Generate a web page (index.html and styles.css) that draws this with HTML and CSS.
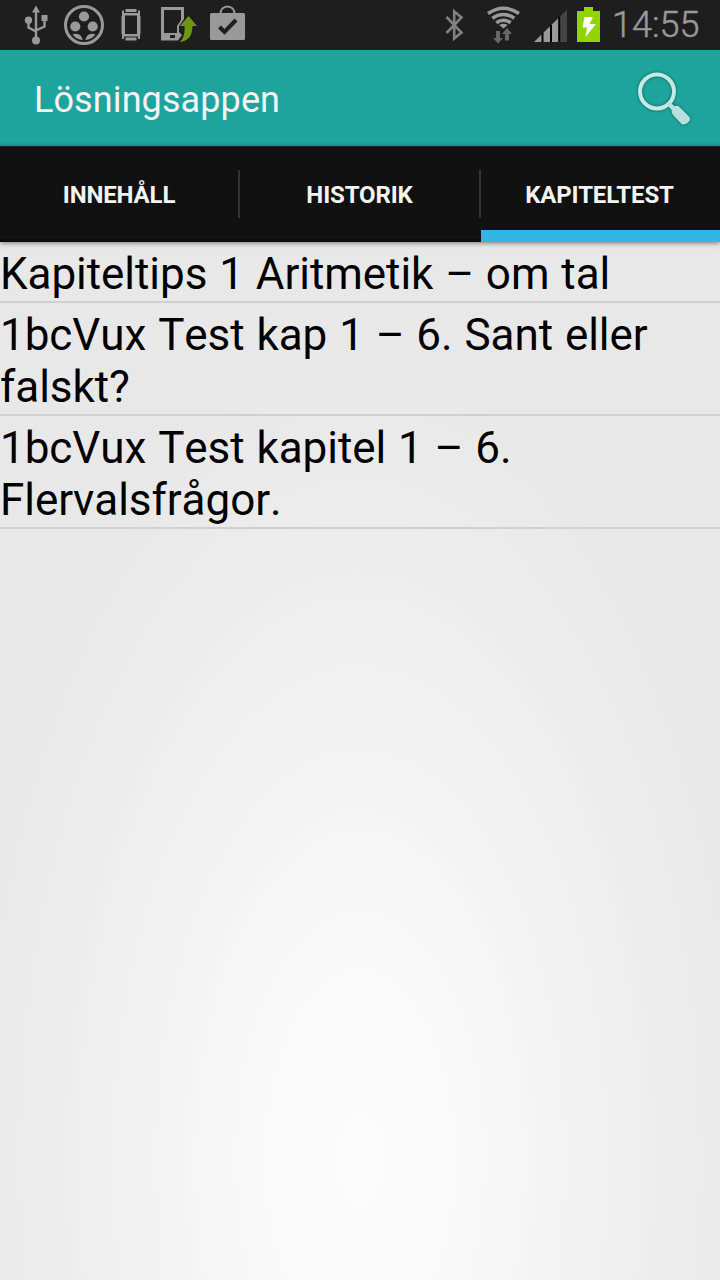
FILE: index.html
```html
<!DOCTYPE html>
<html lang="sv">
<head>
<meta charset="utf-8">
<title>Lösningsappen</title>
<link rel="stylesheet" href="styles.css">
</head>
<body>
<div class="screen">
  <header class="status">
    <div class="status-left">
      <svg width="26" height="50" viewBox="23 0 26 50" fill="none" stroke="#999" stroke-width="2.400">
        <path d="M36 10v30M28.500 20v7.500l7.500 4M44.500 18v8.500l-8.500 4"/>
        <path d="M36 5.500l4 7h-8zM41.500 15h6v6h-6z" fill="#999" stroke="none"/>
        <circle cx="28.500" cy="20.200" r="3.700" fill="#999" stroke="none"/>
        <circle cx="36" cy="40.500" r="4" fill="#999" stroke="none"/>
      </svg>
      <svg class="reel" width="42" height="50" viewBox="63 0 42 50" fill="#999">
        <circle cx="84" cy="25" r="18.500" fill="none" stroke="#999" stroke-width="3"/>
        <circle cx="84" cy="16.500" r="5.100"/><circle cx="75.300" cy="26.500" r="5.100"/><circle cx="92.700" cy="26.500" r="5.100"/>
        <path d="M72.500 34.500q8-3 10.300 5.500q-6.500-.4-10.300-5.500zM95.500 34.500q-8-3-10.300 5.500q6.500-.4 10.300-5.500z"/>
      </svg>
      <svg class="watch" width="22" height="50" viewBox="120 0 22 50" fill="#999">
        <path fill-rule="evenodd" d="M122 10.500h2v2.500h14v-2.500h2V39h-2v-2.500h-14V39h-2zM125 15.500v18.500h12V15.500z"/>
        <path d="M125.500 9h11v3h-11zM125.500 37.500h11v3h-11z"/>
        <path d="M121.500 16h1v18h-1zM139.500 16h1v18h-1z"/>
      </svg>
      <svg class="update" width="37" height="50" viewBox="160 0 37 50">
        <path fill="#999" fill-rule="evenodd" d="M161 7h23v12l-5 7v6l3 3-4 5.500h-17zM164 10v23h13v-7l4-6V10zM170 35v3h5v-3z"/>
        <path fill="#6f9613" d="M188.500 16l8.500 10h-4.500c0 9-4 15.500-13 16c4-3 5.500-8.500 5-16h-4.500z"/>
      </svg>
      <svg class="bag" width="36" height="50" viewBox="210 0 36 50" fill="none">
        <path d="M210 14.500q0-1.500 1.500-1.500h32q1.500 0 1.500 1.500v24q0 1.500-1.500 1.500h-32q-1.500 0-1.500-1.500z" fill="#999"/>
        <path d="M220.500 14c0-4 2.500-7.500 7-7.500s7 3.500 7 7.500" stroke="#999" stroke-width="2"/>
        <path d="M219.500 27l5 5 11.500-12" stroke="#1e1e1e" stroke-width="4"/>
      </svg>
    </div>
    <div class="status-right">
      <svg width="18" height="50" viewBox="445 0 18 50" fill="none" stroke="#808080" stroke-width="2.600">
        <path d="M446.500 17l15 15.500-7.300 6V11.500l7.300 6-15 15.500"/>
      </svg>
      <svg class="wifi" width="34" height="50" viewBox="486 0 34 50" fill="none" stroke="#999" stroke-width="3.500">
        <path d="M488 13.500q15.500-10.500 31 0M492.300 18.300q11-7.600 22 0M496.300 22.800q7.200-5 14.400 0"/>
        <path d="M499.200 25q4.300-2.600 8.600 0l-4.300 3.500z" fill="#999" stroke="none"/>
        <path d="M496 31h4v7h3l-5 5.500-5-5.500h3zM505 40.500h4V34h3l-5-6-5 6h3z" fill="#686868" stroke="none"/>
      </svg>
      <svg class="signal" width="34" height="50" viewBox="534 0 34 50">
        <path d="M534 42L559.500 17v25z" fill="#999"/><path d="M560 16.500l7-7V42h-7z" fill="#444"/>
        <path d="M542.500 42v-9M551 42V25M559.200 42V17" stroke="#000" stroke-width="2"/>
      </svg>
      <svg class="battery" width="23" height="50" viewBox="577 0 23 50">
        <path d="M577 11h7V7h9v4h7v31h-23z" fill="#91d400"/>
        <path d="M584.500 17h8.500l-3.500 7h6.500l-10.500 13 1.500-9.500h-4.500z" fill="#fff"/>
      </svg>
      <span class="clock">14:55</span>
    </div>
  </header>
  <div class="actionbar">
    <h1 class="title">Lösningsappen</h1>
    <svg class="search" width="60" height="60" viewBox="634 68 60 60">
      <circle cx="657" cy="91.500" r="17" fill="none" stroke="#c5e9e6" stroke-width="4"/>
      <path d="M668.500 103.500l6 6" stroke="#b6e0dd" stroke-width="4.500"/>
      <path d="M671.500 109.500q0-2 2.500-3 3-1.500 5.500.5l9.500 9.500q2.500 3-1 6t-6.500 1.500l-8.500-9q-1.500-2-1.500-5.500z" fill="#b6e0dd"/>
    </svg>
  </div>
  <nav class="tabs">
    <div class="tab"><span>INNEHÅLL</span></div>
    <div class="tab"><span>HISTORIK</span></div>
    <div class="tab active"><span>KAPITELTEST</span></div>
  </nav>
  <main class="list">
    <div class="row">Kapiteltips 1 Aritmetik – om tal</div>
    <div class="row">1bcVux Test kap 1 – 6. Sant eller<br>falskt?</div>
    <div class="row">1bcVux Test kapitel 1 – 6.<br>Flervalsfrågor.</div>
  </main>
</div>
</body>
</html>
```
FILE: styles.css
```css
* { box-sizing: border-box; }
body { margin: 0; font-family: Roboto, "Liberation Sans", sans-serif; }
.screen {
  width: 720px;
  height: 1280px;
  overflow: hidden;
  display: flex;
  flex-direction: column;
  background: radial-gradient(ellipse 400px 800px at 360px 1160px, #fcfcfc 0%, #fafafa 22%, #f1f1f1 58%, #e8e8e8 100%);
}
svg { display: block; flex: none; }
.status {
  height: 50px;
  flex: none;
  display: flex;
  justify-content: space-between;
  padding: 0 21px 0 23px;
  background: #1e1e1e;
}
.status-left, .status-right { display: flex; }
.reel { margin-left: 14px; }
.watch { margin-left: 15px; }
.update { margin-left: 18px; }
.bag { margin-left: 13px; }
.wifi { margin-left: 23px; }
.signal { margin-left: 14px; }
.battery { margin-left: 9px; }
.clock {
  width: 87px;
  margin-left: 12px;
  color: #999;
  font-size: 36px;
  line-height: 51px;
  font-weight: 300;
  -webkit-text-stroke: .5px #999;
  white-space: nowrap;
}
.actionbar {
  height: 96px;
  flex: none;
  display: flex;
  align-items: center;
  justify-content: space-between;
  padding: 0 26px 0 34px;
  background: #1ea49c;
}
.title {
  margin: 0;
  padding-top: 4px;
  color: #f3f3f3;
  font-size: 36px;
  font-weight: 400;
  line-height: 42px;
  letter-spacing: .1px;
}
.search { filter: drop-shadow(0 0 1.5px rgba(0, 60, 55, .7)); }
.tabs {
  height: 96px;
  flex: none;
  display: grid;
  grid-template-columns: 240px 241px 239px;
  background: #111;
  border-top: 1px solid #222;
  box-shadow: 0 1px 5px rgba(0, 0, 0, .5);
}
.tab {
  display: flex;
  justify-content: center;
  padding-top: 24px;
  border-bottom: 3px solid #0b0b0b;
  color: #f3f3f3;
  font-size: 24px;
  line-height: 48px;
  font-weight: 700;
  letter-spacing: -.15px;
}
.tab span { padding-right: 2px; white-space: nowrap; }
.tab:not(.active) {
  background: linear-gradient(#333, #333) right 23px / 2px 48px no-repeat;
}
.tab.active { border-bottom: 12px solid #33b5e5; }
.row {
  padding: 6px 0 1px;
  border-bottom: 2px solid #d0d0d0;
  color: #000;
  font-size: 44px;
  line-height: 52px;
  font-kerning: none;
  letter-spacing: -.05px;
  word-spacing: 1px;
  white-space: nowrap;
}
```
